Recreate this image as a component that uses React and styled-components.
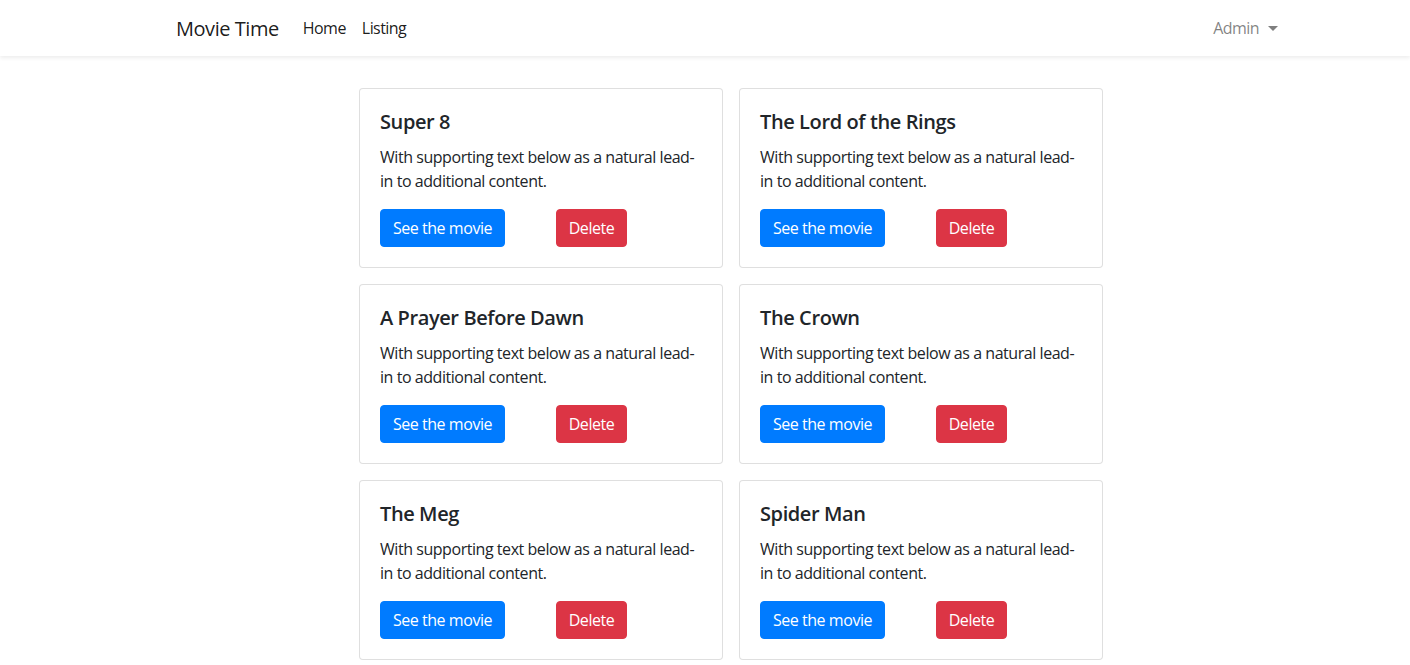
import React from "react";
import styled, { createGlobalStyle } from "styled-components";

const GlobalStyle = createGlobalStyle`
  * { box-sizing: border-box; }
  html, body { margin: 0; padding: 0; background: #fff; }
  body {
    font-family: "Segoe UI", "Open Sans", "Noto Sans", sans-serif;
    font-size: 16px;
    line-height: 1.5;
    color: #212529;
  }
`;

const Page = styled.div`
  padding-left: 52px;
`;

const NavBar = styled.nav`
  height: 56px;
  margin-left: -52px;
  padding-left: 52px;
  background: #fff;
  box-shadow: 0 2px 4px rgba(0, 0, 0, 0.075);
`;

const NavInner = styled.div`
  width: 1140px;
  margin: 0 auto;
  padding: 8px 15px;
  height: 56px;
  display: flex;
  align-items: center;
`;

const Brand = styled.a`
  font-size: 20px;
  line-height: 30px;
  color: rgba(0, 0, 0, 0.9);
  margin-right: 16px;
  letter-spacing: -0.45px;
  text-decoration: none;
  padding-top: 2px;
`;

const NavLinks = styled.div`
  display: flex;
  flex: 1;
`;

const NavLink = styled.a`
  padding: 8px 8px;
  font-size: 16px;
  letter-spacing: -0.55px;
  color: ${(p) => (p.$muted ? "rgba(0,0,0,0.5)" : "rgba(0,0,0,0.9)")};
  text-decoration: none;
  display: flex;
  align-items: center;
`;

const Caret = styled.span`
  display: inline-block;
  margin-left: 9px;
  border-top: 5px solid rgba(0, 0, 0, 0.5);
  border-left: 5px solid transparent;
  border-right: 5px solid transparent;
  width: 0;
  height: 0;
`;

const Main = styled.main`
  width: 744px;
  margin: 32px auto 0;
  display: grid;
  grid-template-columns: 364px 364px;
  gap: 16px;
`;

const Card = styled.div`
  border: 1px solid rgba(0, 0, 0, 0.125);
  border-radius: 4px;
  padding: 20px;
  background: #fff;
`;

const Title = styled.h5`
  margin: 0 0 12px;
  padding-top: 1px;
  font-size: 20px;
  line-height: 24px;
  font-weight: 600;
  letter-spacing: -0.4px;
`;

const Text = styled.p`
  margin: -1px 0 16px;
  font-size: 16px;
  line-height: 24px;
  letter-spacing: -0.45px;
`;

const Actions = styled.div`
  display: flex;
`;

const Button = styled.button`
  font-family: inherit;
  font-size: 16px;
  line-height: 24px;
  letter-spacing: -0.45px;
  white-space: nowrap;
  height: 38px;
  padding: 5px 0 6px;
  border-radius: 4px;
  border: 1px solid ${(p) => (p.$danger ? "#dc3545" : "#007bff")};
  background: ${(p) => (p.$danger ? "#dc3545" : "#007bff")};
  color: #fff;
  width: ${(p) => p.$w}px;
  margin-left: ${(p) => p.$ml || 0}px;
  cursor: pointer;
`;

const movies = [
  "Super 8",
  "The Lord of the Rings",
  "A Prayer Before Dawn",
  "The Crown",
  "The Meg",
  "Spider Man",
];

export default function App() {
  return (
    <Page>
      <GlobalStyle />
      <NavBar>
        <NavInner>
          <Brand href="#">Movie Time</Brand>
          <NavLinks>
            <NavLink href="#">Home</NavLink>
            <NavLink href="#">Listing</NavLink>
          </NavLinks>
          <NavLink href="#" $muted>
            Admin
            <Caret />
          </NavLink>
        </NavInner>
      </NavBar>
      <Main>
        {movies.map((m) => (
          <Card key={m}>
            <Title>{m}</Title>
            <Text>With supporting text below as a natural lead-in to additional content.</Text>
            <Actions>
              <Button $w={125}>See the movie</Button>
              <Button $danger $w={71} $ml={51}>
                Delete
              </Button>
            </Actions>
          </Card>
        ))}
      </Main>
    </Page>
  );
}
